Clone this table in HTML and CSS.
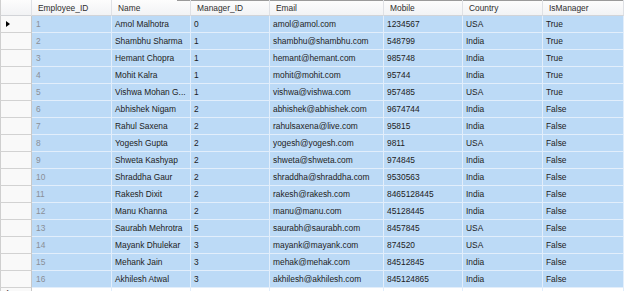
FILE: index.html
```html
<!DOCTYPE html>
<html>
<head>
<meta charset="utf-8">
<link rel="stylesheet" href="styles.css">
</head>
<body>
<div class="grid">
  <div class="row head">
    <div class="c sel"></div><div class="c">Employee_ID</div><div class="c">Name</div><div class="c">Manager_ID</div><div class="c">Email</div><div class="c">Mobile</div><div class="c">Country</div><div class="c">IsManager</div>
  </div>
  <div class="row data">
    <div class="c sel"><span class="arrow"></span></div><div class="c id">1</div><div class="c">Amol Malhotra</div><div class="c">0</div><div class="c">amol@amol.com</div><div class="c">1234567</div><div class="c">USA</div><div class="c">True</div>
  </div>
  <div class="row data">
    <div class="c sel"></div><div class="c id">2</div><div class="c">Shambhu Sharma</div><div class="c">1</div><div class="c">shambhu@shambhu.com</div><div class="c">548799</div><div class="c">India</div><div class="c">True</div>
  </div>
  <div class="row data">
    <div class="c sel"></div><div class="c id">3</div><div class="c">Hemant Chopra</div><div class="c">1</div><div class="c">hemant@hemant.com</div><div class="c">985748</div><div class="c">India</div><div class="c">True</div>
  </div>
  <div class="row data">
    <div class="c sel"></div><div class="c id">4</div><div class="c">Mohit Kalra</div><div class="c">1</div><div class="c">mohit@mohit.com</div><div class="c">95744</div><div class="c">India</div><div class="c">True</div>
  </div>
  <div class="row data">
    <div class="c sel"></div><div class="c id">5</div><div class="c">Vishwa Mohan G...</div><div class="c">1</div><div class="c">vishwa@vishwa.com</div><div class="c">957485</div><div class="c">USA</div><div class="c">True</div>
  </div>
  <div class="row data">
    <div class="c sel"></div><div class="c id">6</div><div class="c">Abhishek Nigam</div><div class="c">2</div><div class="c">abhishek@abhishek.com</div><div class="c">9674744</div><div class="c">India</div><div class="c">False</div>
  </div>
  <div class="row data">
    <div class="c sel"></div><div class="c id">7</div><div class="c">Rahul Saxena</div><div class="c">2</div><div class="c">rahulsaxena@live.com</div><div class="c">95815</div><div class="c">India</div><div class="c">False</div>
  </div>
  <div class="row data">
    <div class="c sel"></div><div class="c id">8</div><div class="c">Yogesh Gupta</div><div class="c">2</div><div class="c">yogesh@yogesh.com</div><div class="c">9811</div><div class="c">USA</div><div class="c">False</div>
  </div>
  <div class="row data">
    <div class="c sel"></div><div class="c id">9</div><div class="c">Shweta Kashyap</div><div class="c">2</div><div class="c">shweta@shweta.com</div><div class="c">974845</div><div class="c">India</div><div class="c">False</div>
  </div>
  <div class="row data">
    <div class="c sel"></div><div class="c id">10</div><div class="c">Shraddha Gaur</div><div class="c">2</div><div class="c">shraddha@shraddha.com</div><div class="c">9530563</div><div class="c">India</div><div class="c">False</div>
  </div>
  <div class="row data">
    <div class="c sel"></div><div class="c id">11</div><div class="c">Rakesh Dixit</div><div class="c">2</div><div class="c">rakesh@rakesh.com</div><div class="c">8465128445</div><div class="c">India</div><div class="c">False</div>
  </div>
  <div class="row data">
    <div class="c sel"></div><div class="c id">12</div><div class="c">Manu Khanna</div><div class="c">2</div><div class="c">manu@manu.com</div><div class="c">45128445</div><div class="c">India</div><div class="c">False</div>
  </div>
  <div class="row data">
    <div class="c sel"></div><div class="c id">13</div><div class="c">Saurabh Mehrotra</div><div class="c">5</div><div class="c">saurabh@saurabh.com</div><div class="c">8457845</div><div class="c">USA</div><div class="c">False</div>
  </div>
  <div class="row data">
    <div class="c sel"></div><div class="c id">14</div><div class="c">Mayank Dhulekar</div><div class="c">3</div><div class="c">mayank@mayank.com</div><div class="c">874520</div><div class="c">USA</div><div class="c">False</div>
  </div>
  <div class="row data">
    <div class="c sel"></div><div class="c id">15</div><div class="c">Mehank Jain</div><div class="c">3</div><div class="c">mehak@mehak.com</div><div class="c">84512845</div><div class="c">India</div><div class="c">False</div>
  </div>
  <div class="row data">
    <div class="c sel"></div><div class="c id">16</div><div class="c">Akhilesh Atwal</div><div class="c">3</div><div class="c">akhilesh@akhilesh.com</div><div class="c">845124865</div><div class="c">India</div><div class="c">False</div>
  </div>
  <div class="row data newrow">
    <div class="c sel"><span class="star">*</span></div><div class="c id">NULL</div><div class="c">NULL</div><div class="c">NULL</div><div class="c">NULL</div><div class="c">NULL</div><div class="c">NULL</div><div class="c">NULL</div>
  </div>
</div>
</body>
</html>
```
FILE: styles.css
```css
html, body {
  margin: 0;
  padding: 0;
  background: #ffffff;
  overflow: hidden;
}
body {
  width: 624px;
  height: 291px;
  font-family: "Liberation Sans", Arial, sans-serif;
  font-size: 8.4px;
  color: #1c1c1c;
}
.grid {
  display: flex;
  flex-direction: column;
  height: 291px;
  overflow: hidden;
}
.row {
  display: grid;
  grid-template-columns: 32px 80px 79px 79px 114px 79px 80px 1fr;
  flex: none;
}
.c {
  box-sizing: border-box;
  white-space: nowrap;
  overflow: hidden;
  display: flex;
  align-items: center;
}
.head {
  height: 16px;
  background:
    linear-gradient(to right, transparent 177px, #9a9a9a 177px) top left / 100% 1px no-repeat,
    linear-gradient(#fdfdfd, #f1f2f4);
  color: #2e2e2e;
}
.head .c {
  border-right: 1px solid #dfe1e5;
  border-bottom: 1px solid #d2d4d8;
  padding-left: 6px;
}
.head .c.sel {
  border-left: 1px solid #d0d0d0;
}
.data {
  height: 17px;
}
.data .c {
  background: #bcdaf6;
  border-right: 1px solid #e2eefb;
  border-bottom: 1px solid #e2eefb;
  padding-left: 3px;
}
.data .c.id {
  color: #8a8f96;
  padding-left: 4px;
}
.data .c.sel {
  background: #f9f9f9;
  border-left: 1px solid #cfcfcf;
  border-right: 1px solid #c8c8c8;
  border-bottom: 1px solid #d2d2d2;
  padding-left: 5px;
}
.arrow {
  width: 0;
  height: 0;
  border-top: 3.5px solid transparent;
  border-bottom: 3.5px solid transparent;
  border-left: 4px solid #000;
}
.newrow .c {
  background: #ffffff;
  align-items: flex-start;
  padding-top: 1px;
}
.newrow .c.id {
  color: #8a8f96;
}
.star {
  font-weight: bold;
  line-height: 8px;
}
```
